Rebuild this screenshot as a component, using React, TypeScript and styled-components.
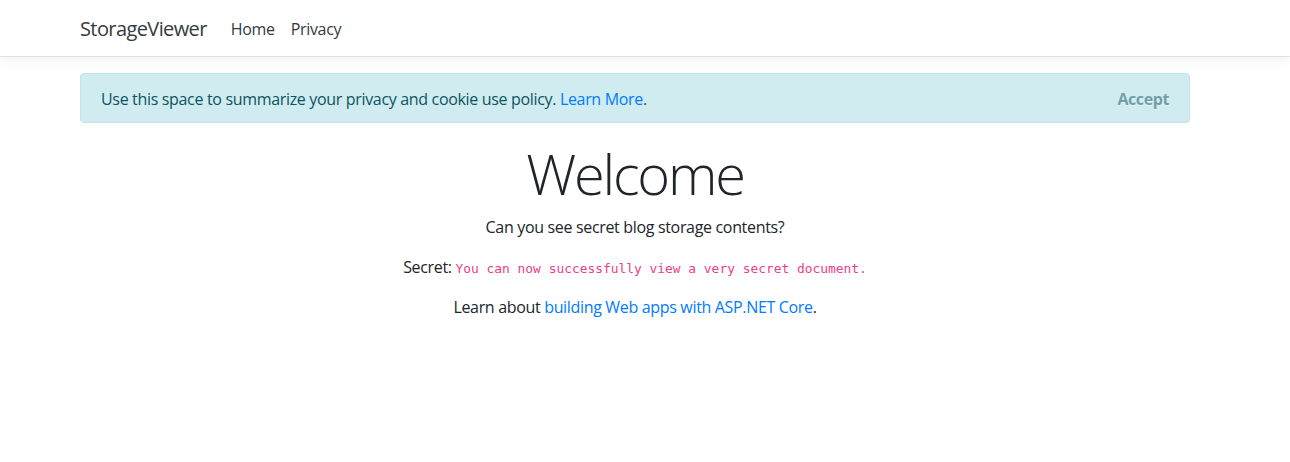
import React from "react";
import styled, { createGlobalStyle } from "styled-components";

const GlobalStyle = createGlobalStyle`
  html, body { margin: 0; padding: 0; background: #fff; }
  body {
    font-family: "Open Sans", "Noto Sans", sans-serif;
    font-size: 16px;
    line-height: 1.5;
    color: #212529;
    letter-spacing: -0.33px;
  }
  a { color: #007bff; text-decoration: none; }
`;

const Frame = styled.div`
  width: 1270px;
`;

const Container = styled.div`
  width: 1140px;
  margin: 0 auto;
  padding: 0 15px;
  box-sizing: border-box;
`;

const Header = styled.header`
  background: #fff;
  border-bottom: 1px solid #dee2e6;
  box-shadow: 0 0.25rem 0.75rem rgba(0, 0, 0, 0.05);
  margin-bottom: 16px;
`;

const Navbar = styled.nav`
  display: flex;
  align-items: center;
  padding: 9px 0 7px;
`;

const Brand = styled.a`
  font-size: 20px;
  line-height: 30px;
  padding: 5px 0;
  margin-right: 16px;
  color: #343a40;
  letter-spacing: -0.6px;
`;

const NavList = styled.ul`
  display: flex;
  list-style: none;
  margin: 0;
  padding: 0;
`;

const NavLink = styled.a`
  display: block;
  padding: 8px;
  color: #343a40;
  line-height: 24px;
`;

const Alert = styled.div`
  position: relative;
  padding: 13px 64px 11px 20px;
  margin-bottom: 16px;
  border: 1px solid #bee5eb;
  border-radius: 4px;
  background: #d1ecf1;
  color: #0c5460;
`;

const AlertLink = styled.a`
  color: #007bff;
`;

const AcceptButton = styled.button`
  position: absolute;
  top: 0;
  right: 0;
  padding: 13px 20px 11px;
  background: transparent;
  border: 0;
  font-family: inherit;
  font-size: 16px;
  line-height: 24px;
  font-weight: 700;
  letter-spacing: -0.4px;
  color: #0c5460;
  opacity: 0.5;
  text-shadow: 0 1px 0 #fff;
  cursor: pointer;
`;

const Main = styled.main`
  text-align: center;
  padding: 1px 0 16px;
`;

const Display = styled.h1`
  font-size: 56px;
  font-weight: 300;
  line-height: 1.2;
  margin: 0 0 8px;
  letter-spacing: -2.2px;
`;

const Para = styled.p`
  margin: 0 0 16px;
`;

const Code = styled.code`
  font-family: "DejaVu Sans Mono", "Liberation Mono", monospace;
  font-size: 12.9px;
  letter-spacing: 0;
  color: #e83e8c;
`;

export default function App() {
  return (
    <>
      <GlobalStyle />
      <Header>
        <Frame>
          <Container>
            <Navbar>
              <Brand href="#">StorageViewer</Brand>
              <NavList>
                <li>
                  <NavLink href="#">Home</NavLink>
                </li>
                <li>
                  <NavLink href="#">Privacy</NavLink>
                </li>
              </NavList>
            </Navbar>
          </Container>
        </Frame>
      </Header>
      <Frame>
        <Container>
          <Alert role="alert">
            Use this space to summarize your privacy and cookie use policy.{" "}
            <AlertLink href="#">Learn More</AlertLink>.
            <AcceptButton type="button" aria-label="Close">
              <span aria-hidden="true">Accept</span>
            </AcceptButton>
          </Alert>
          <Main role="main">
            <Display>Welcome</Display>
            <Para>Can you see secret blog storage contents?</Para>
            <Para>
              Secret: <Code>You can now successfully view a very secret document.</Code>
            </Para>
            <Para>
              Learn about <a href="#">building Web apps with ASP.NET Core</a>.
            </Para>
          </Main>
        </Container>
      </Frame>
    </>
  );
}
